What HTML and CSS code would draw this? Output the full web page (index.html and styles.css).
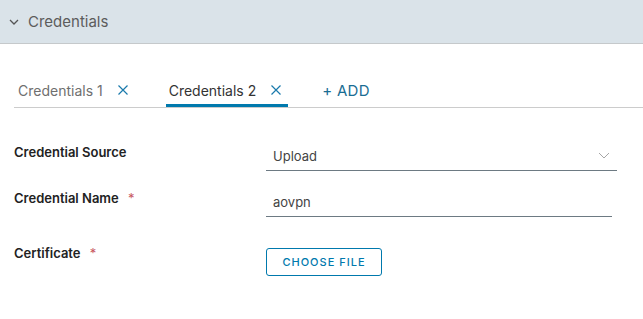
FILE: index.html
```html
<!DOCTYPE html>
<html lang="en">

<head>
    <meta charset="UTF-8">
    <meta name="viewport" content="width=device-width, initial-scale=1.0">
    <title>Credentials</title>
    <link rel="stylesheet" href="styles.css">
</head>

<body>
    <!-- Section header -->
    <div class="section-header">
        <svg class="chevron" width="10" height="6" viewBox="0 0 10 6">
            <path d="M1 1 L5 5 L9 1" fill="none" stroke="#555" stroke-width="1.3"/>
        </svg>
        <span>Credentials</span>
    </div>

    <!-- Tabs -->
    <div class="tabs">
        <div class="tab">
            <span>Credentials 1</span>
            <svg class="tab-close" width="10" height="10" viewBox="0 0 10 10">
                <path d="M0.5 0.5 L9.5 9.5 M9.5 0.5 L0.5 9.5" stroke="#1a7aac" stroke-width="1.2"/>
            </svg>
        </div>
        <div class="tab active">
            <span>Credentials 2</span>
            <svg class="tab-close" width="10" height="10" viewBox="0 0 10 10">
                <path d="M0.5 0.5 L9.5 9.5 M9.5 0.5 L0.5 9.5" stroke="#1a7aac" stroke-width="1.2"/>
            </svg>
        </div>
        <div class="tab-add">+ ADD</div>
    </div>

    <!-- Form -->
    <div class="form">
        <div class="form-row">
            <label class="form-label">Credential Source</label>
            <div class="select-field">
                <span>Upload</span>
                <svg width="12" height="7" viewBox="0 0 12 7">
                    <path d="M1 1 L6 6 L11 1" fill="none" stroke="#a6a6a6" stroke-width="1"/>
                </svg>
            </div>
        </div>
        <div class="form-row">
            <label class="form-label">Credential Name <span class="required">*</span></label>
            <div class="input-field">aovpn</div>
        </div>
        <div class="form-row file-row">
            <label class="form-label">Certificate <span class="required">*</span></label>
            <div>
                <button class="file-button">CHOOSE FILE</button>
            </div>
        </div>
    </div>
</body>

</html>
```

FILE: styles.css
```css
body {
    margin: 0;
    background-color: #ffffff;
    font-family: 'Inter', sans-serif;
    color: #333333;
}

.section-header {
    height: 44px;
    background-color: #dae3e9;
    border-bottom: 1px solid #c5c9cb;
    display: flex;
    align-items: center;
    padding-left: 9px;
    font-size: 15px;
    color: #5c5c5c;
    box-sizing: border-box;
}

.section-header .chevron {
    margin-right: 9px;
}

.tabs {
    display: flex;
    align-items: flex-end;
    margin: 32px 0 0 14px;
    border-bottom: 1px solid #cccccc;
    height: 31px;
}

.tab {
    display: flex;
    align-items: center;
    height: 28px;
    padding: 0 7px 0 4px;
    margin-right: 31px;
    font-size: 14px;
    color: #6f6f6f;
    border-bottom: 3px solid transparent;
}

.tab.active {
    padding-left: 3px;
    color: #333333;
    border-bottom-color: #0079ad;
    margin-right: 34px;
}

.tab-close {
    margin-left: 15px;
}

.tab-add {
    height: 31px;
    display: flex;
    align-items: center;
    padding-bottom: 3px;
    box-sizing: border-box;
    color: #1a6d93;
    font-size: 15px;
    letter-spacing: 0.3px;
}

.form {
    margin: 33px 0 0 14px;
    display: flex;
    flex-direction: column;
    gap: 16px;
}

.form-row {
    display: grid;
    grid-template-columns: 252px 351px;
    align-items: start;
}

.file-row {
    margin-top: 12px;
}

.form-label {
    font-size: 13px;
    font-weight: 600;
    color: #222222;
    padding-top: 3px;
}

.file-row .form-label {
    padding-top: 0;
}

.required {
    color: #c8585f;
    font-weight: normal;
    margin-left: 6px;
}

.select-field {
    display: flex;
    justify-content: space-between;
    align-items: center;
    height: 30px;
    padding: 0 7px 0 7px;
    border-bottom: 1px solid #6d7a83;
    font-size: 13px;
    color: #444444;
    box-sizing: border-box;
}

.input-field {
    width: 346px;
    height: 30px;
    line-height: 30px;
    padding-left: 7px;
    border-bottom: 1px solid #6d7a83;
    font-size: 13px;
    color: #444444;
    box-sizing: border-box;
}

.file-button {
    margin-top: 3px;
    width: 116px;
    height: 28px;
    border: 1px solid #0079ad;
    border-radius: 3px;
    background-color: #ffffff;
    color: #0079ad;
    font-family: 'Inter', sans-serif;
    font-size: 11px;
    font-weight: 500;
    letter-spacing: 1px;
    cursor: pointer;
}
```
